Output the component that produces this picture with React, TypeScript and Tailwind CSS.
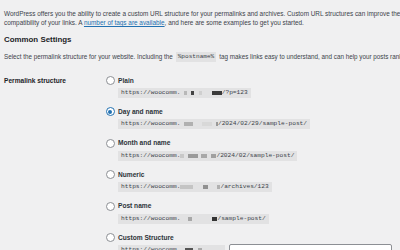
import React from "react";

type Blk = { w: number; ml: number; c: string };

const mono = { fontFamily: '"Liberation Mono", "Courier New", monospace' };

function Code({ blocks, tail }: { blocks: Blk[]; tail: string }) {
  return (
    <div
      className="flex items-center self-start w-fit h-[10px] bg-[#e2e2e3] pl-[3px] pr-[3px] text-[6.2px] leading-[10px] text-[#3c434a] whitespace-nowrap"
      style={mono}
    >
      <span>https://woocomm.</span>
      {blocks.map((b, i) => (
        <span
          key={i}
          className="inline-block h-[4px] shrink-0 blur-[0.4px]"
          style={{ width: b.w, marginLeft: b.ml, background: b.c }}
        />
      ))}
      <span>{tail}</span>
    </div>
  );
}

function Radio({ checked }: { checked?: boolean }) {
  return (
    <span
      className={
        "flex items-center justify-center w-[9px] h-[9px] rounded-full bg-white border-[0.8px] shrink-0 " +
        (checked ? "border-[#2271b1]" : "border-[#8c8f94]")
      }
    >
      {checked && <span className="w-[3.5px] h-[3.5px] rounded-full bg-[#2271b1]" />}
    </span>
  );
}

function Option({ label, checked, children }: { label: string; checked?: boolean; children: React.ReactNode }) {
  return (
    <div className="flex flex-col h-[31.4px]">
      <div className="flex items-center h-[10px] gap-[3.5px] -ml-[12.5px]">
        <Radio checked={checked} />
        <span className="font-semibold text-[6.6px] leading-[10px] text-[#2c3338]">{label}</span>
      </div>
      <div className="mt-[2.5px] flex">{children}</div>
    </div>
  );
}

export default function App() {
  const sans = { fontFamily: '"Liberation Sans", Arial, sans-serif' };
  return (
    <div className="w-[400px] h-[250px] overflow-hidden bg-[#f0f0f1] text-[#3c434a] pl-[4px]" style={sans}>
      <p className="pt-[9px] text-[6.4px] leading-[9.3px] whitespace-nowrap">
        WordPress offers you the ability to create a custom URL structure for your permalinks and archives. Custom URL structures can improve the
        <br />
        compatibility of your links. A{" "}
        <span className="text-[#2271b1] underline">number of tags are available</span>, and here are some examples to get you started.
      </p>
      <h2 className="mt-[7px] text-[7.9px] leading-[10px] font-semibold text-[#1d2327]">Common Settings</h2>
      <div className="mt-[7px] text-[6.3px] leading-[10px] whitespace-nowrap flex items-center overflow-hidden">
        <span>Select the permalink structure for your website. Including the</span>
        <span className="mx-[3px] bg-[#e2e2e3] px-[2px] h-[10px] leading-[10px] text-[6.1px]" style={mono}>
          %postname%
        </span>
        <span>tag makes links easy to understand, and can help your posts rank</span>
      </div>
      <div className="flex mt-[14px]">
        <div className="w-[114px] shrink-0 font-semibold text-[6.6px] leading-[10px] text-[#1d2327]">Permalink structure</div>
        <div className="flex flex-col">
          <Option label="Plain">
            <Code
              tail="/?p=123"
              blocks={[
                { w: 3.5, ml: 3.3, c: "#b8b8b8" },
                { w: 3.5, ml: 3.5, c: "#444" },
                { w: 3, ml: 4.5, c: "#cfcfcf" },
                { w: 10, ml: 10, c: "#3a3a3a" },
              ]}
            />
          </Option>
          <Option label="Day and name" checked>
            <Code
              tail="/2024/02/29/sample-post/"
              blocks={[
                { w: 9, ml: 4, c: "#b0b0b0" },
                { w: 10, ml: 9, c: "#d8d8d8" },
                { w: 1.5, ml: 4, c: "#999" },
              ]}
            />
          </Option>
          <Option label="Month and name">
            <Code
              tail="/2024/02/sample-post/"
              blocks={[
                { w: 4, ml: 0, c: "#c8c8c8" },
                { w: 10, ml: 4, c: "#9a9a9a" },
                { w: 6, ml: 3, c: "#a8a8a8" },
                { w: 5, ml: 4, c: "#a0a0a0" },
              ]}
            />
          </Option>
          <Option label="Numeric">
            <Code
              tail="/archives/123"
              blocks={[
                { w: 13, ml: 0, c: "#c4c4c4" },
                { w: 5, ml: 10, c: "#909090" },
                { w: 3, ml: 9, c: "#b0b0b0" },
              ]}
            />
          </Option>
          <Option label="Post name">
            <Code
              tail="/sample-post/"
              blocks={[
                { w: 4, ml: 8, c: "#a8a8a8" },
                { w: 5, ml: 20, c: "#333" },
              ]}
            />
          </Option>
          <div className="flex flex-col">
            <div className="flex items-center h-[10px] gap-[3.5px] -ml-[12.5px]">
              <Radio />
              <span className="font-semibold text-[6.6px] leading-[10px] text-[#2c3338]">Custom Structure</span>
            </div>
            <div className="flex items-start mt-[2.5px] gap-[4px]">
              <div
                className="flex items-center h-[10px] w-[107px] bg-[#e2e2e3] pl-[3px] text-[6.2px] leading-[10px] whitespace-nowrap overflow-hidden"
                style={mono}
              >
                <span>https://woocomm.</span>
                <span className="inline-block h-[4px] w-[8px] ml-[5px] bg-[#555] blur-[0.4px]" />
                <span className="inline-block h-[4px] w-[4px] ml-[5px] bg-[#aaa] blur-[0.4px]" />
              </div>
              <div className="h-[14px] w-[163px] bg-white border-[0.8px] border-[#8c8f94] rounded-[2px] mt-[-1px]" />
            </div>
          </div>
        </div>
      </div>
    </div>
  );
}
